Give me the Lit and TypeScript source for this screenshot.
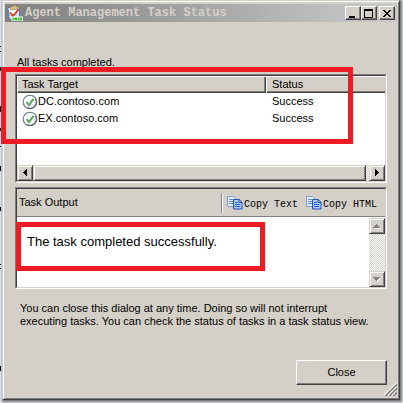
import { LitElement, html, css, svg } from "lit";
import { customElement, property } from "lit/decorators.js";

const arrow = (dir: string, dim = false) => {
  const pts: Record<string, string> = {
    left: "M6 0h1v7H6zM5 1h1v5H5zM4 2h1v3H4zM3 3h1v1H3z",
    right: "M3 0h1v7H3zM4 1h1v5H4zM5 2h1v3H5zM6 3h1v1H6z",
    up: "M4 2h1v1H4zM3 3h3v1H3zM2 4h5v1H2zM1 5h7v1H1z",
    down: "M1 2h7v1H1zM2 3h5v1H2zM3 4h3v1H3zM4 5h1v1H4z",
  };
  return html`<svg width="10" height="8" viewBox="0 0 10 8" shape-rendering="crispEdges" aria-hidden="true">
    ${dim ? svg`<path d=${pts[dir]} fill="#fff" transform="translate(1 1)"/>` : ""}
    <path d=${pts[dir]} fill=${dim ? "#808080" : "#000"} />
  </svg>`;
};

const appIcon = html`<svg width="16" height="16" viewBox="0 0 16 16" aria-hidden="true">
  <path d="M.5 2.500h12.500v12H2z" fill="#5b7fc0"/>
  <path d="M1.500 3h10.500v10.500H3z" fill="#f7f9fd"/>
  <path d="M2 11l10-5v7.500H3z" fill="#d3e0f3"/>
  <path d="M3.500 1.500H6V.5h3v1h2.500v3h-8z" fill="#d2bd84" stroke="#8a7846" stroke-width=".6"/>
  <path d="M3 7.500l3 3.500L11.500 4.500" fill="none" stroke="#d93a22" stroke-width="1.900"/>
  <rect x="4.500" y="11.500" width="11.500" height="4.500" fill="#f0faec"/>
  <path d="M5.500 12.500h2v3h-2zM8 12.500h2v3H8zM10.500 12.500h2v3h-2zM13 12.500h2v3h-2z" fill="#3cbc34"/>
</svg>`;

const okIcon = html`<svg width="16" height="16" viewBox="0 0 16 16" aria-hidden="true">
  <circle cx="8" cy="8" r="6.800" fill="#fafcfd" stroke="#66777f" stroke-width="1.100"/>
  <path d="M13.500 5a6.500 6.500 0 0 1-8.500 8.800" fill="none" stroke="#3e4d56" stroke-width=".8"/>
  <path d="M4.500 8.200l2.500 2.900 4.500-6.300" fill="none" stroke="#5aa35a" stroke-width="2"/>
</svg>`;

const copyIcon = html`<svg width="16" height="14" viewBox="0 0 16 14" aria-hidden="true">
  <path d="M.5.5h6l2 2v8h-8z" fill="#e4eefb" stroke="#7f9ed8"/>
  <path d="M2 3.500h4M2 5.500h5M2 7.500h5" stroke="#5f88d6"/>
  <path d="M6.500 3.500h6l2.500 3v6.500H6.500z" fill="#a9c8f6" stroke="#2453b8"/>
  <path d="M12 3.500v3h3z" fill="#fff" stroke="#2453b8"/>
  <path d="M8 6.500h3M8 8.500h5M8 10.500h5" stroke="#2f62d0"/>
</svg>`;

@customElement("scroll-bar")
class ScrollBar extends LitElement {
  @property({ reflect: true }) axis = "horizontal";
  static styles = css`
    :host { display: flex; background: repeating-conic-gradient(#fff 0 25%, #d4d0c8 0 50%) 0 0 / 2px 2px; }
    :host([axis="horizontal"]) { height: 16px; }
    :host([axis="vertical"]) { flex-direction: column; justify-content: space-between; width: 16px; }
    button, .thumb {
      box-sizing: border-box; background: #d4d0c8; border: 1px solid;
      border-color: #d4d0c8 #404040 #404040 #d4d0c8;
      box-shadow: inset 1px 1px #fff, inset -1px -1px #808080;
    }
    button { width: 16px; height: 16px; padding: 0; display: grid; place-items: center; flex: none; }
    .thumb { flex: 1; margin-right: 3px; }
  `;
  render() {
    return this.axis === "horizontal"
      ? html`<button aria-label="Scroll left">${arrow("left")}</button>
          <div class="thumb"></div>
          <button aria-label="Scroll right">${arrow("right")}</button>`
      : html`<button aria-label="Scroll up" disabled>${arrow("up", true)}</button>
          <button aria-label="Scroll down" disabled>${arrow("down", true)}</button>`;
  }
}

@customElement("app-root")
class AppRoot extends LitElement {
  tasks = [
    { target: "DC.contoso.com", status: "Success" },
    { target: "EX.contoso.com", status: "Success" },
  ];

  static styles = css`
    :host {
      display: block; box-sizing: border-box; min-height: 100vh; padding: 0 3px 3px 2px;
      background: #e4e8ee; color: #000; position: relative;
      font: 11px/13px Tahoma, "Liberation Sans", sans-serif;
    }
    * { box-sizing: border-box; }
    .behind { position: absolute; left: 0; top: 0; width: 1px; height: 100%; }
    .dialog {
      display: flex; flex-direction: column; min-height: calc(100vh - 3px); padding: 2px;
      background: #d4d0c8; border: 1px solid; border-color: #d4d0c8 #404040 #404040 #c9d2dc;
      box-shadow: inset 1px 1px #fff, inset -1px -1px #808080, 1px 1px 2px 1px #777;
    }
    .title {
      display: flex; align-items: center; height: 18px; margin: 1px 0 0; padding: 0 2px; gap: 2px;
      background: linear-gradient(90deg, #808080, #c0c0c0 85%, #c8c8c6);
    }
    h1 {
      flex: 1; margin: 0; white-space: nowrap; color: #d4d0c8;
      font: bold 12px/20px SimSun, "Liberation Mono", monospace;
    }
    .winbtns { display: flex; }
    .winbtns button {
      width: 16px; height: 14px; padding: 0; display: grid; place-items: center;
    }
    .winbtns button:last-child { margin-left: 2px; }
    .raised {
      background: #d4d0c8; border: 1px solid; border-color: #fff #404040 #404040 #fff;
      box-shadow: inset -1px -1px #808080; color: #000; font: inherit;
    }
    main { display: flex; flex-direction: column; flex: 1; padding: 34px 10px 12px; }
    .state { margin: 0 0 5px 2px; }
    .sunken {
      position: relative; background: #fff; border: 1px solid; border-color: #808080 #fff #fff #808080;
    }
    .sunken > .in { border: 1px solid; border-color: #404040 #d4d0c8 #d4d0c8 #404040; display: flex; }
    .list { flex-direction: column; height: 107px; }
    table { width: 100%; border-collapse: collapse; table-layout: fixed; }
    th {
      height: 17px; padding: 0 5px; text-align: left; font-weight: normal; background: #d4d0c8;
      box-shadow: inset 1px 1px #fff, inset 0 -1px #404040, inset 0 -2px #808080;
    }
    th:first-child { width: 249px; box-shadow: inset 1px 1px #fff, inset -1px -1px #404040, inset -2px -2px #808080; }
    td { height: 17px; padding: 0 5px; }
    td:last-child, th:last-child { padding-left: 6px; }
    .target { display: flex; align-items: center; }
    scroll-bar[axis="horizontal"] { margin-top: auto; }
    .output { margin-top: 4px; }
    .output > .in { flex-direction: column; }
    .bar {
      display: flex; align-items: center; height: 28px; padding: 0 8px 0 2px;
      background: #d4d0c8; border-bottom: 1px solid #808080;
    }
    h2 { margin: 0; flex: 1; font: inherit; }
    .tools { display: flex; gap: 8px; padding-left: 5px; border-left: 1px solid #808080; box-shadow: inset 1px 0 #fff; height: 20px; align-items: center; }
    .tools button {
      display: flex; align-items: center; gap: 1px; padding: 0; border: 0; background: none; color: #000;
      font: 10px/16px SimSun, "Liberation Mono", monospace; white-space: nowrap;
    }
    .tools span { padding-top: 4px; }
    .body { display: flex; height: 70px; padding-top: 1px; }
    .message { flex: 1; margin: 0; padding: 15px 10px; font-size: 13px; line-height: 18px; }
    .mark { position: absolute; border: 5px solid #ed1c24; pointer-events: none; }
    .mark-list { left: -15px; right: 33px; top: -8px; height: 77px; }
    .mark-msg { left: 0; width: 249px; top: 34px; height: 49px; }
    .note { margin: 13px 0 0; padding: 0 16px 0 5px; }
    footer { display: flex; justify-content: flex-end; margin-top: auto; }
    footer button { width: 91px; height: 25px; padding: 0; }
    .grip { position: absolute; right: 6px; bottom: 7px; }
  `;

  render() {
    return html`
      <svg class="behind" viewBox="0 0 1 403" preserveAspectRatio="none" aria-hidden="true">
        <path d="M0 46h1v1H0zM0 51h1v1H0zM0 67h1v4H0zM0 106h1v6H0zM0 128h1v3H0zM0 146h1v1H0zM0 166h1v5H0zM0 207h1v4H0zM0 264h1v1H0zM0 268h1v1H0zM0 366h1v5H0z"/>
      </svg>
      <div class="dialog" role="dialog" aria-labelledby="title">
        <header class="title">
          ${appIcon}
          <h1 id="title">Agent Management Task Status</h1>
          <div class="winbtns">
            <button class="raised" aria-label="Minimize">
              <svg width="12" height="10" shape-rendering="crispEdges"><path d="M2 8h6v2H2z"/></svg>
            </button>
            <button class="raised" aria-label="Maximize">
              <svg width="12" height="10" shape-rendering="crispEdges"><path d="M1 1h9v9H1zM2 3v6h7V3z" fill-rule="evenodd"/></svg>
            </button>
            <button class="raised" aria-label="Close window">
              <svg width="12" height="10" shape-rendering="crispEdges"><path d="M2 2h2v1h1v1h2V3h1V2h2v1H9v1H8v1H7v1h1v1h1v1h1v1H8V8H7V7H5v1H4v1H2V8h1V7h1V6h1V5H4V4H3V3H2z"/></svg>
            </button>
          </div>
        </header>
        <main>
          <p class="state">All tasks completed.</p>
          <section class="sunken">
            <div class="in list">
              <table>
                <thead><tr><th>Task Target</th><th>Status</th></tr></thead>
                <tbody>
                  ${this.tasks.map((t) => html`<tr>
                    <td><div class="target">${okIcon}<span>${t.target}</span></div></td>
                    <td>${t.status}</td>
                  </tr>`)}
                </tbody>
              </table>
              <scroll-bar axis="horizontal"></scroll-bar>
            </div>
            <div class="mark mark-list"></div>
          </section>
          <section class="sunken output">
            <div class="in">
              <div class="bar">
                <h2>Task Output</h2>
                <div class="tools">
                  <button>${copyIcon}<span>Copy Text</span></button>
                  <button>${copyIcon}<span>Copy HTML</span></button>
                </div>
              </div>
              <div class="body">
                <p class="message">The task completed successfully.</p>
                <scroll-bar axis="vertical"></scroll-bar>
              </div>
            </div>
            <div class="mark mark-msg"></div>
          </section>
          <p class="note">You can close this dialog at any time. Doing so will not interrupt executing tasks. You can check the status of tasks in a task status view.</p>
          <footer><button class="raised">Close</button></footer>
        </main>
        <svg class="grip" width="13" height="13" viewBox="0 0 13 13" aria-hidden="true">
          <path d="M0 12L12 0M4 12l8-8M8 12l4-4" stroke="#fff"/>
          <path d="M1.500 13L13 1.500M5.500 13L13 5.500M9.500 13L13 9.500" stroke="#808080" stroke-width="1.500"/>
        </svg>
      </div>
    `;
  }
}
